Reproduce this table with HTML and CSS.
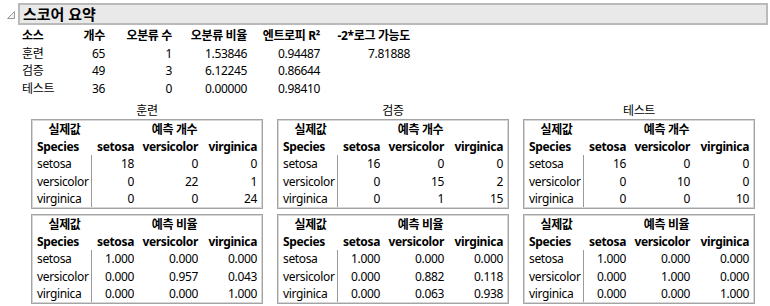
FILE: index.html
```html
<!DOCTYPE html>
<html lang="ko">
<head>
<meta charset="utf-8">
<title>스코어 요약</title>
<link rel="stylesheet" href="styles.css">
</head>
<body>
<div class="report">
  <div class="outline-head">
    <span class="disc">
      <svg width="8" height="8" viewBox="0 0 8 8"><path d="M7.5 0.5 L7.5 7.5 L0.5 7.5 Z" fill="#f2f2f2" stroke="#9a9a9a" stroke-width="1"/></svg>
    </span>
    <div class="title-bar">스코어 요약</div>
  </div>

  <div class="summary">
    <div class="h l">소스</div><div class="h">개수</div><div class="h">오분류 수</div><div class="h">오분류 비율</div><div class="h">엔트로피 R²</div><div class="h">-2*로그 가능도</div>
    <div class="l">훈련</div><div>65</div><div>1</div><div>1.53846</div><div>0.94487</div><div>7.81888</div>
    <div class="l">검증</div><div>49</div><div>3</div><div>6.12245</div><div>0.86644</div><div></div>
    <div class="l">테스트</div><div>36</div><div>0</div><div>0.00000</div><div>0.98410</div><div></div>
  </div>

  <div class="matrices">
    <div class="group">
      <div class="group-label">훈련</div>
      <div class="mbox">
        <div class="hd c">실제값</div><div class="hd c span3">예측 개수</div>
        <div class="hd">Species</div><div class="hd r">setosa</div><div class="hd r">versicolor</div><div class="hd r">virginica</div>
        <div class="lab">setosa</div><div class="r">18</div><div class="r">0</div><div class="r">0</div>
        <div class="lab">versicolor</div><div class="r">0</div><div class="r">22</div><div class="r">1</div>
        <div class="lab">virginica</div><div class="r">0</div><div class="r">0</div><div class="r">24</div>
      </div>
      <div class="mbox">
        <div class="hd c">실제값</div><div class="hd c span3">예측 비율</div>
        <div class="hd">Species</div><div class="hd r">setosa</div><div class="hd r">versicolor</div><div class="hd r">virginica</div>
        <div class="lab">setosa</div><div class="r">1.000</div><div class="r">0.000</div><div class="r">0.000</div>
        <div class="lab">versicolor</div><div class="r">0.000</div><div class="r">0.957</div><div class="r">0.043</div>
        <div class="lab">virginica</div><div class="r">0.000</div><div class="r">0.000</div><div class="r">1.000</div>
      </div>
    </div>

    <div class="group">
      <div class="group-label">검증</div>
      <div class="mbox">
        <div class="hd c">실제값</div><div class="hd c span3">예측 개수</div>
        <div class="hd">Species</div><div class="hd r">setosa</div><div class="hd r">versicolor</div><div class="hd r">virginica</div>
        <div class="lab">setosa</div><div class="r">16</div><div class="r">0</div><div class="r">0</div>
        <div class="lab">versicolor</div><div class="r">0</div><div class="r">15</div><div class="r">2</div>
        <div class="lab">virginica</div><div class="r">0</div><div class="r">1</div><div class="r">15</div>
      </div>
      <div class="mbox">
        <div class="hd c">실제값</div><div class="hd c span3">예측 비율</div>
        <div class="hd">Species</div><div class="hd r">setosa</div><div class="hd r">versicolor</div><div class="hd r">virginica</div>
        <div class="lab">setosa</div><div class="r">1.000</div><div class="r">0.000</div><div class="r">0.000</div>
        <div class="lab">versicolor</div><div class="r">0.000</div><div class="r">0.882</div><div class="r">0.118</div>
        <div class="lab">virginica</div><div class="r">0.000</div><div class="r">0.063</div><div class="r">0.938</div>
      </div>
    </div>

    <div class="group">
      <div class="group-label">테스트</div>
      <div class="mbox">
        <div class="hd c">실제값</div><div class="hd c span3">예측 개수</div>
        <div class="hd">Species</div><div class="hd r">setosa</div><div class="hd r">versicolor</div><div class="hd r">virginica</div>
        <div class="lab">setosa</div><div class="r">16</div><div class="r">0</div><div class="r">0</div>
        <div class="lab">versicolor</div><div class="r">0</div><div class="r">10</div><div class="r">0</div>
        <div class="lab">virginica</div><div class="r">0</div><div class="r">0</div><div class="r">10</div>
      </div>
      <div class="mbox">
        <div class="hd c">실제값</div><div class="hd c span3">예측 비율</div>
        <div class="hd">Species</div><div class="hd r">setosa</div><div class="hd r">versicolor</div><div class="hd r">virginica</div>
        <div class="lab">setosa</div><div class="r">1.000</div><div class="r">0.000</div><div class="r">0.000</div>
        <div class="lab">versicolor</div><div class="r">0.000</div><div class="r">1.000</div><div class="r">0.000</div>
        <div class="lab">virginica</div><div class="r">0.000</div><div class="r">0.000</div><div class="r">1.000</div>
      </div>
    </div>
  </div>
</div>
</body>
</html>
```

FILE: styles.css
```css
html, body {
  margin: 0;
  padding: 0;
  background: #ffffff;
}

body {
  font-family: "Noto Sans", "Noto Sans CJK KR", sans-serif;
  font-size: 12px;
  letter-spacing: -0.35px;
  color: #000;
}

.report {
  width: 770px;
  height: 306px;
  padding: 3px 2px 0 7px;
  box-sizing: border-box;
  overflow: hidden;
}

.outline-head {
  display: flex;
  align-items: flex-start;
}

.disc {
  width: 11px;
  height: 22px;
  display: flex;
  align-items: flex-start;
  padding-top: 8px;
  box-sizing: border-box;
}

.title-bar {
  flex: 1;
  height: 22px;
  box-sizing: border-box;
  border: 2px solid #bababa;
  background: #e9e9e9;
  font-size: 15px;
  font-weight: bold;
  letter-spacing: 0;
  line-height: 18px;
  padding-left: 3px;
}

.summary {
  display: grid;
  grid-template-columns: 50px 33px 67px 75px 73px 90px;
  grid-auto-rows: 17.5px;
  line-height: 17.5px;
  margin: 2px 0 0 15px;
  width: max-content;
}

.summary > div {
  text-align: right;
  white-space: nowrap;
}

.summary > .l {
  text-align: left;
}

.summary > .h {
  font-weight: bold;
}

.matrices {
  display: flex;
  gap: 14px;
  margin: 4px 0 0 24px;
}

.group {
  display: flex;
  flex-direction: column;
  gap: 5px;
  width: 232px;
}

.group-label {
  text-align: center;
  line-height: 20px;
  height: 13px;
}

.mbox {
  display: grid;
  grid-template-columns: 55px 42px 64px 59px;
  grid-auto-rows: 17.2px;
  line-height: 17.2px;
  border: 1px solid #a4a4a4;
  box-shadow: inset 0 0 0 1px #d6d6d6;
  padding: 1px 5px 1px 5px;
  width: 232px;
  box-sizing: border-box;
}

.mbox > div {
  white-space: nowrap;
}

.mbox .hd {
  font-weight: bold;
}

.mbox .c {
  text-align: center;
}

.mbox .r {
  text-align: right;
}

.mbox .span3 {
  grid-column: span 3;
}

.mbox .lab {
  border-right: 1px solid #9a9a9a;
}
```
